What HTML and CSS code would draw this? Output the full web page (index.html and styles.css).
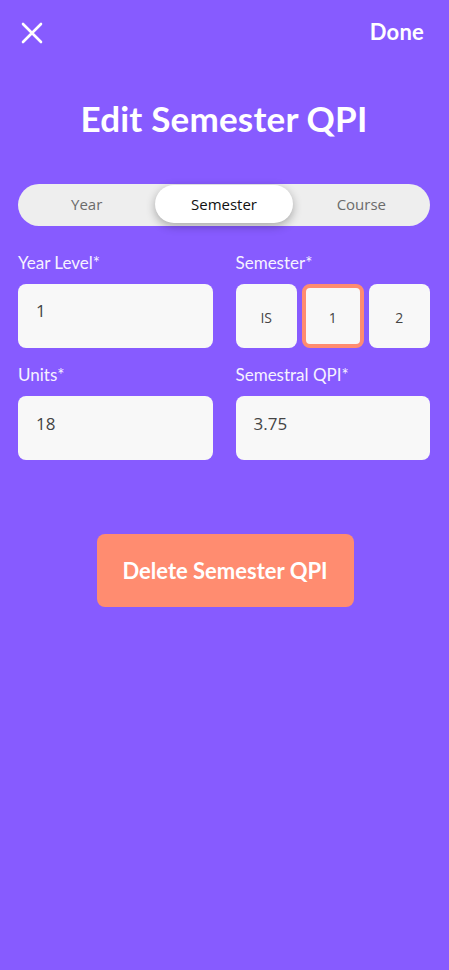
FILE: index.html
```html
<!DOCTYPE html>
<html>
<head>
<meta charset="utf-8">
<link rel="stylesheet" href="styles.css">
</head>
<body>
<div class="screen">
  <header class="topbar">
    <svg class="close" width="22" height="22" viewBox="0 0 22 22"><path d="M2 2L20 20M20 2L2 20" stroke="#fff" stroke-width="2.6" stroke-linecap="round" fill="none"/></svg>
    <span class="done">Done</span>
  </header>
  <h1 class="title">Edit Semester QPI</h1>
  <div class="segment">
    <div class="seg">Year</div>
    <div class="seg active">Semester</div>
    <div class="seg">Course</div>
  </div>
  <div class="form">
    <div class="field">
      <label class="label">Year Level*</label>
      <div class="input">1</div>
    </div>
    <div class="field">
      <label class="label">Semester*</label>
      <div class="choices">
        <div class="choice">IS</div>
        <div class="choice selected">1</div>
        <div class="choice">2</div>
      </div>
    </div>
    <div class="field">
      <label class="label">Units*</label>
      <div class="input">18</div>
    </div>
    <div class="field">
      <label class="label">Semestral QPI*</label>
      <div class="input">3.75</div>
    </div>
  </div>
  <div class="actions">
    <button class="delete">Delete Semester QPI</button>
  </div>
</div>
</body>
</html>
```
FILE: styles.css
```css
html, body {
  margin: 0;
  padding: 0;
  background: #875bff;
}
body {
  font-family: Lato, "Open Sans", sans-serif;
  color: #fff;
}
.screen {
  width: 449px;
  height: 970px;
  box-sizing: border-box;
  padding: 0 19px 0 18px;
}
.topbar {
  display: flex;
  justify-content: space-between;
  align-items: center;
  height: 64px;
  padding: 0 6px 0 3px;
}
.close { display: block; margin-top: 1px; }
.done {
  font-weight: 700;
  font-size: 22px;
  margin-top: -2px;
  letter-spacing: 0.2px;
}
.title {
  margin: 32px 0 0;
  text-align: center;
  font-size: 35px;
  font-weight: 700;
  line-height: 44px;
  letter-spacing: 0.2px;
}
.segment {
  margin-top: 44px;
  height: 42px;
  border-radius: 21px;
  background: #eeeeee;
  display: grid;
  grid-template-columns: 1fr 1fr 1fr;
  align-items: center;
  padding: 1px 0 3px;
  box-sizing: border-box;
}
.seg {
  text-align: center;
  font-family: "Open Sans", sans-serif;
  font-size: 15px;
  color: #6b6b6b;
  height: 38px;
  line-height: 38px;
}
.seg.active {
  background: #fff;
  color: #111;
  border-radius: 19px;
  box-shadow: 0 3px 10px rgba(0,0,0,0.3);
}
.form {
  margin-top: 26px;
  display: grid;
  grid-template-columns: 1fr 1fr;
  column-gap: 23px;
  row-gap: 16px;
}
.field { display: flex; flex-direction: column; }
.label {
  font-size: 17px;
  line-height: 22px;
  color: #f6f2ff;
  margin-bottom: 10px;
}
.input {
  height: 64px;
  border-radius: 8px;
  background: #f8f8f8;
  box-sizing: border-box;
  padding: 15px 18px 0;
  font-family: "Open Sans", sans-serif;
  font-size: 17px;
  color: #444;
}
.field:nth-child(n+3) .input { padding-top: 16px; }
.choices {
  display: grid;
  grid-template-columns: 1fr 1fr 1fr;
  gap: 5px;
}
.choice {
  height: 64px;
  border-radius: 8px;
  background: #f8f8f8;
  display: flex;
  align-items: center;
  justify-content: center;
  font-family: "Open Sans", sans-serif;
  font-size: 14px;
  color: #444;
  box-sizing: border-box;
  padding-top: 3px;
}
.choice.selected {
  border: 4px solid #ff8c70;
}
.actions {
  display: flex;
  justify-content: center;
  margin-top: 74px;
}
.delete {
  width: 257px;
  height: 73px;
  border: none;
  border-radius: 8px;
  background: #ff8c70;
  color: #fff;
  font-family: Lato, sans-serif;
  font-weight: 700;
  font-size: 22px;
  margin-left: 2px;
}
```
